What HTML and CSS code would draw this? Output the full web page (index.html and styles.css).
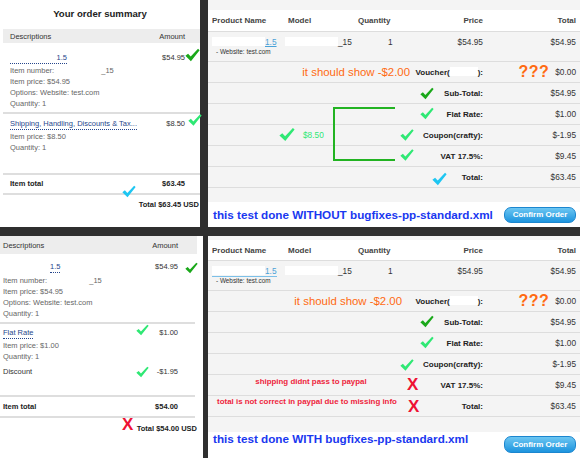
FILE: index.html
```html
<!DOCTYPE html>
<html lang="en">
<head>
    <meta charset="UTF-8">
    <title>bugfixes-pp-standard test</title>
    <link rel="stylesheet" href="styles.css">
</head>
<body>
    <svg class="defs" width="0" height="0">
        <symbol id="chk" viewBox="0 0 16 14">
            <path d="M0.4 7.9 L3.3 5.7 L6.1 8.7 L13.9 0.4 L15.6 1.9 L6.3 13.6 Z"/>
        </symbol>
    </svg>

    <div class="board">
        <!-- paypal summary, without the fix -->
        <section class="summary sum-top">
            <h2 class="summary-title">Your order summary</h2>
            <div class="sum-head"><span>Descriptions</span><span>Amount</span></div>

            <div class="sum-item first">
                <div class="sum-desc">
                    <a class="sum-link wide">1.5</a>
                    <p>Item number: <span class="gap"></span>_15</p>
                    <p>Item price: $54.95</p>
                    <p>Options: Website: test.com</p>
                    <p>Quantity: 1</p>
                </div>
                <div class="sum-amt">$54.95</div>
            </div>

            <div class="sum-item ship">
                <div class="sum-desc">
                    <a class="sum-link">Shipping, Handling, Discounts &amp; Tax...</a>
                    <p>Item price: $8.50</p>
                    <p>Quantity: 1</p>
                </div>
                <div class="sum-amt">$8.50</div>
            </div>

            <div class="sum-total"><span>Item total</span><span>$63.45</span></div>
            <div class="sum-grand">Total $63.45 USD</div>

            <svg class="mark chk-dark" style="left:185px;top:48px;width:15px;height:14px"><use href="#chk"/></svg>
            <svg class="mark chk-light" style="left:188px;top:113px;width:14px;height:14px"><use href="#chk"/></svg>
            <svg class="mark chk-cyan" style="left:122px;top:185px;width:14px;height:13px"><use href="#chk"/></svg>
        </section>

        <!-- cart, without the fix -->
        <section class="cart cart-top">
            <div class="cart-row cart-head">
                <span>Product Name</span><span>Model</span><span>Quantity</span>
                <span class="num">Price</span><span class="num">Total</span>
            </div>
            <div class="cart-row cart-item">
                <div class="prod">
                    <a class="prod-link"><span class="redact name"></span>1.5</a>
                    <small>- Website: test.com</small>
                </div>
                <div><span class="redact model"></span>_15</div>
                <div class="qty">1</div>
                <div class="num">$54.95</div>
                <div class="num">$54.95</div>
            </div>
            <div class="cart-row">
                <div class="note orange">it should show -$2.00</div>
                <div class="label">Voucher(<span class="redact voucher"></span>):</div>
                <div class="num"><span class="qmarks">???</span>$0.00</div>
            </div>
            <div class="cart-row"><div class="note"></div><div class="label">Sub-Total:</div><div class="num">$54.95</div></div>
            <div class="cart-row"><div class="note"></div><div class="label">Flat Rate:</div><div class="num">$1.00</div></div>
            <div class="cart-row"><div class="note"></div><div class="label">Coupon(crafty):</div><div class="num">$-1.95</div></div>
            <div class="cart-row"><div class="note"></div><div class="label">VAT 17.5%:</div><div class="num">$9.45</div></div>
            <div class="cart-row"><div class="note"></div><div class="label">Total:</div><div class="num">$63.45</div></div>
            <div class="cart-blank"></div>
            <div class="cart-foot">
                <span class="caption">this test done WITHOUT bugfixes-pp-standard.xml</span>
                <button class="confirm">Confirm Order</button>
            </div>

            <div class="bracket"></div>
            <svg class="mark chk-light" style="left:71px;top:127px;width:16px;height:15px"><use href="#chk"/></svg>
            <span class="mark mid-amt" style="left:95px;top:130px">$8.50</span>
            <svg class="mark chk-dark" style="left:212px;top:87px;width:14px;height:13px"><use href="#chk"/></svg>
            <svg class="mark chk-light" style="left:212px;top:107px;width:14px;height:13px"><use href="#chk"/></svg>
            <svg class="mark chk-light" style="left:192px;top:128px;width:14px;height:14px"><use href="#chk"/></svg>
            <svg class="mark chk-light" style="left:192px;top:148px;width:14px;height:14px"><use href="#chk"/></svg>
            <svg class="mark chk-cyan" style="left:224px;top:172px;width:15px;height:14px"><use href="#chk"/></svg>
        </section>

        <!-- paypal summary, with the fix -->
        <section class="summary sum-bottom">
            <div class="sum-head"><span>Descriptions</span><span>Amount</span></div>

            <div class="sum-item first">
                <div class="sum-desc">
                    <a class="sum-link">1.5</a>
                    <p>Item number: <span class="gap"></span>_15</p>
                    <p>Item price: $54.95</p>
                    <p>Options: Website: test.com</p>
                    <p>Quantity: 1</p>
                </div>
                <div class="sum-amt">$54.95</div>
            </div>

            <div class="sum-item ship">
                <div class="sum-desc">
                    <a class="sum-link">Flat Rate</a>
                    <p>Item price: $1.00</p>
                    <p>Quantity: 1</p>
                </div>
                <div class="sum-amt">$1.00</div>
                <div class="sum-disc">Discount</div>
                <div class="sum-amt disc">-$1.95</div>
            </div>

            <div class="sum-total"><span>Item total</span><span>$54.00</span></div>
            <div class="sum-grand">Total $54.00 USD</div>

            <svg class="mark chk-dark" style="left:185px;top:26px;width:13px;height:12px"><use href="#chk"/></svg>
            <svg class="mark chk-light" style="left:136px;top:87px;width:13px;height:14px"><use href="#chk"/></svg>
            <svg class="mark chk-light" style="left:136px;top:129px;width:13px;height:14px"><use href="#chk"/></svg>
            <span class="mark cross" style="left:122px;top:180px">X</span>
        </section>

        <!-- cart, with the fix -->
        <section class="cart cart-bottom">
            <div class="cart-row cart-head">
                <span>Product Name</span><span>Model</span><span>Quantity</span>
                <span class="num">Price</span><span class="num">Total</span>
            </div>
            <div class="cart-row cart-item">
                <div class="prod">
                    <a class="prod-link full"><span class="redact name"></span>1.5</a>
                    <small>- Website: test.com</small>
                </div>
                <div><span class="redact model"></span>_15</div>
                <div class="qty">1</div>
                <div class="num">$54.95</div>
                <div class="num">$54.95</div>
            </div>
            <div class="cart-row">
                <div class="note orange short">it should show -$2.00</div>
                <div class="label">Voucher(<span class="redact voucher"></span>):</div>
                <div class="num"><span class="qmarks">???</span>$0.00</div>
            </div>
            <div class="cart-row"><div class="note"></div><div class="label">Sub-Total:</div><div class="num">$54.95</div></div>
            <div class="cart-row"><div class="note"></div><div class="label">Flat Rate:</div><div class="num">$1.00</div></div>
            <div class="cart-row"><div class="note"></div><div class="label">Coupon(crafty):</div><div class="num">$-1.95</div></div>
            <div class="cart-row"><div class="note red">shipping didnt pass to paypal</div><div class="label">VAT 17.5%:</div><div class="num">$9.45</div></div>
            <div class="cart-row"><div class="note red up">total is not correct in paypal due to missing info</div><div class="label">Total:</div><div class="num">$63.45</div></div>
            <div class="cart-blank"></div>
            <div class="cart-foot low">
                <span class="caption">this test done WITH bugfixes-pp-standard.xml</span>
                <button class="confirm">Confirm Order</button>
            </div>

            <svg class="mark chk-dark" style="left:212px;top:79px;width:14px;height:13px"><use href="#chk"/></svg>
            <svg class="mark chk-light" style="left:212px;top:100px;width:14px;height:13px"><use href="#chk"/></svg>
            <svg class="mark chk-light" style="left:192px;top:122px;width:14px;height:14px"><use href="#chk"/></svg>
            <span class="mark cross" style="left:199px;top:140px">X</span>
            <span class="mark cross" style="left:200px;top:162px">X</span>
        </section>
    </div>
</body>
</html>
```

FILE: styles.css
```css
* {
    margin: 0;
    padding: 0;
    box-sizing: border-box;
}

body {
    width: 580px;
    height: 458px;
    overflow: hidden;
    background-color: #2f2f2f;
    font-family: "Liberation Sans", Arial, sans-serif;
}

.defs {
    position: absolute;
}

.board {
    display: grid;
    grid-template-columns: 203px 372px;
    grid-template-rows: 227px 222px;
    column-gap: 5px;
    row-gap: 9px;
}

/* ---------- paypal summary ---------- */
.summary {
    position: relative;
    overflow: hidden;
    background-color: #fff;
    color: #666;
    font-size: 7.5px;
    line-height: 11px;
}

.sum-top {
    margin-right: 3px;
    overflow: visible;
}

.sum-desc p {
    color: #666;
}

.summary-title {
    height: 29px;
    line-height: 27px;
    text-align: center;
    font-size: 9.6px;
    color: #222;
}

.sum-head {
    display: flex;
    justify-content: space-between;
    align-items: center;
    background-color: #ededed;
    color: #333;
}

.sum-top .sum-head {
    height: 14px;
    margin-left: 3px;
    padding: 0 15px 0 7px;
}

.sum-bottom .sum-head {
    height: 18px;
    margin-right: 6px;
    padding: 0 19px 0 3px;
}

.sum-item {
    display: grid;
    grid-template-columns: 1fr auto;
    border-bottom: 2px solid #dedede;
}

.sum-top .sum-item {
    margin-left: 3px;
    padding-left: 7px;
    padding-right: 15px;
}

.sum-top .sum-item.first {
    padding-top: 8.5px;
    padding-bottom: 3.5px;
}

.sum-top .sum-item.ship {
    padding-top: 3.5px;
    padding-bottom: 20.5px;
}

.sum-bottom .sum-item {
    margin-right: 8px;
    padding-left: 3px;
    padding-right: 17px;
}

.sum-bottom .sum-item.first {
    padding-top: 6.5px;
    padding-bottom: 3.5px;
}

.sum-bottom .sum-item.ship {
    padding-top: 2.5px;
    padding-bottom: 18.5px;
}

.sum-link {
    display: inline-block;
    color: #26468c;
    border-bottom: 1px dotted #26468c;
    line-height: 10px;
    margin-bottom: 1px;
}

.sum-bottom .sum-item.first .sum-link {
    margin-left: 47px;
    margin-bottom: 2px;
}

.sum-link.wide {
    width: 57px;
    text-align: right;
}

.gap {
    display: inline-block;
    width: 45px;
}

.sum-bottom .gap {
    width: 40px;
}

.sum-amt {
    color: #333;
    text-align: right;
}

.sum-disc {
    margin-top: 4px;
    color: #333;
}

.sum-amt.disc {
    margin-top: 4px;
}

.sum-total {
    display: flex;
    justify-content: space-between;
    font-weight: bold;
    color: #222;
    border-bottom: 2px solid #dedede;
}

.sum-top .sum-total {
    height: 20px;
    line-height: 18px;
    margin-left: 3px;
    padding: 0 15px 0 7px;
}

.sum-bottom .sum-total {
    height: 21px;
    line-height: 19px;
    margin-right: 8px;
    padding: 0 17px 0 3px;
}

.sum-grand {
    text-align: right;
    font-weight: bold;
    color: #222;
    white-space: nowrap;
}

.sum-top .sum-grand {
    padding: 3.5px 1px 0 0;
}

.sum-bottom .sum-grand {
    padding-top: 4.5px;
    padding-right: 6px;
}

/* ---------- cart ---------- */
.cart {
    position: relative;
    overflow: hidden;
    background-color: #f4f4f4;
    color: #333;
    font-size: 8.3px;
}

.cart-top {
    padding-top: 10px;
}

.cart-bottom {
    padding-top: 4px;
}

.cart-row {
    display: grid;
    grid-template-columns: 76px 70px 52px 73px 93px;
    align-items: center;
    height: 21px;
    padding: 0 4px;
    border-bottom: 1px solid #dddddd;
}

.cart-head {
    height: 22px;
    background-color: #fff;
    font-weight: bold;
    font-size: 8px;
    color: #444;
}

.cart-bottom .cart-head {
    height: 21px;
}

.num {
    text-align: right;
}

.cart-item {
    height: 30px;
    align-items: start;
    padding-top: 5px;
}

.prod small {
    display: block;
    font-size: 6.4px;
    margin: 1px 0 0 4px;
}

.prod-link {
    color: #4aa2d8;
    text-decoration: underline;
}

.prod-link.full {
    text-decoration: none;
    border-bottom: 1px solid #7cc0e8;
}

.redact {
    display: inline-block;
    height: 9px;
    vertical-align: -1px;
    background-color: #fff;
}

.redact.name {
    width: 53px;
}

.redact.model {
    width: 53px;
    margin-left: -3px;
}

.redact.voucher {
    width: 28px;
}

.qty {
    padding-left: 30px;
}

.note {
    grid-column: 1 / 4;
    text-align: center;
}

.note.orange {
    text-align: right;
    color: #ff6a12;
    font-size: 11.4px;
}

.note.orange.short {
    padding-right: 8px;
}

.note.red {
    align-self: start;
    padding: 2px 0 0 0;
    color: #ee1f3c;
    font-weight: bold;
    font-size: 7.9px;
    line-height: 9px;
}

.note.red.up {
    padding: 1px 8px 0 0;
}

.label {
    text-align: right;
    font-weight: bold;
    font-size: 8px;
    color: #222;
}

.qmarks {
    color: #ff6a12;
    font-weight: bold;
    font-size: 16px;
    letter-spacing: 0.5px;
    margin-right: 6px;
    vertical-align: -2px;
}

.cart-blank {
    height: 14px;
}

.cart-bottom .cart-blank {
    height: 15px;
}

.cart-foot {
    display: flex;
    justify-content: space-between;
    align-items: center;
    height: 25px;
    padding: 0 4px 0 5px;
    background-color: #fff;
}

.cart-foot.low {
    height: 26px;
    align-items: flex-start;
}

.caption {
    color: #1a38f0;
    font-weight: bold;
    font-size: 11.7px;
}

.confirm {
    width: 72px;
    height: 16px;
    border: 1px solid #1b86cf;
    border-radius: 7px;
    background: linear-gradient(#6cc6f2, #1d94de);
    color: #fff;
    font-family: inherit;
    font-weight: bold;
    font-size: 8px;
}

.cart-foot.low .confirm {
    margin-top: 4px;
    height: 17px;
}

/* ---------- annotations drawn over the screenshots ---------- */
.mark {
    position: absolute;
}

.chk-dark {
    fill: #1aa81a;
}

.chk-light {
    fill: #2fe874;
}

.chk-cyan {
    fill: #1ec6f2;
}

.cross {
    color: #ee1133;
    font-weight: bold;
    font-size: 17px;
    line-height: 1;
}

.mid-amt {
    color: #2fe874;
    font-size: 8.3px;
    line-height: 10px;
}

.bracket {
    position: absolute;
    left: 125px;
    top: 107px;
    width: 62px;
    height: 54px;
    border: 2px solid #22b322;
    border-right: none;
}
```
